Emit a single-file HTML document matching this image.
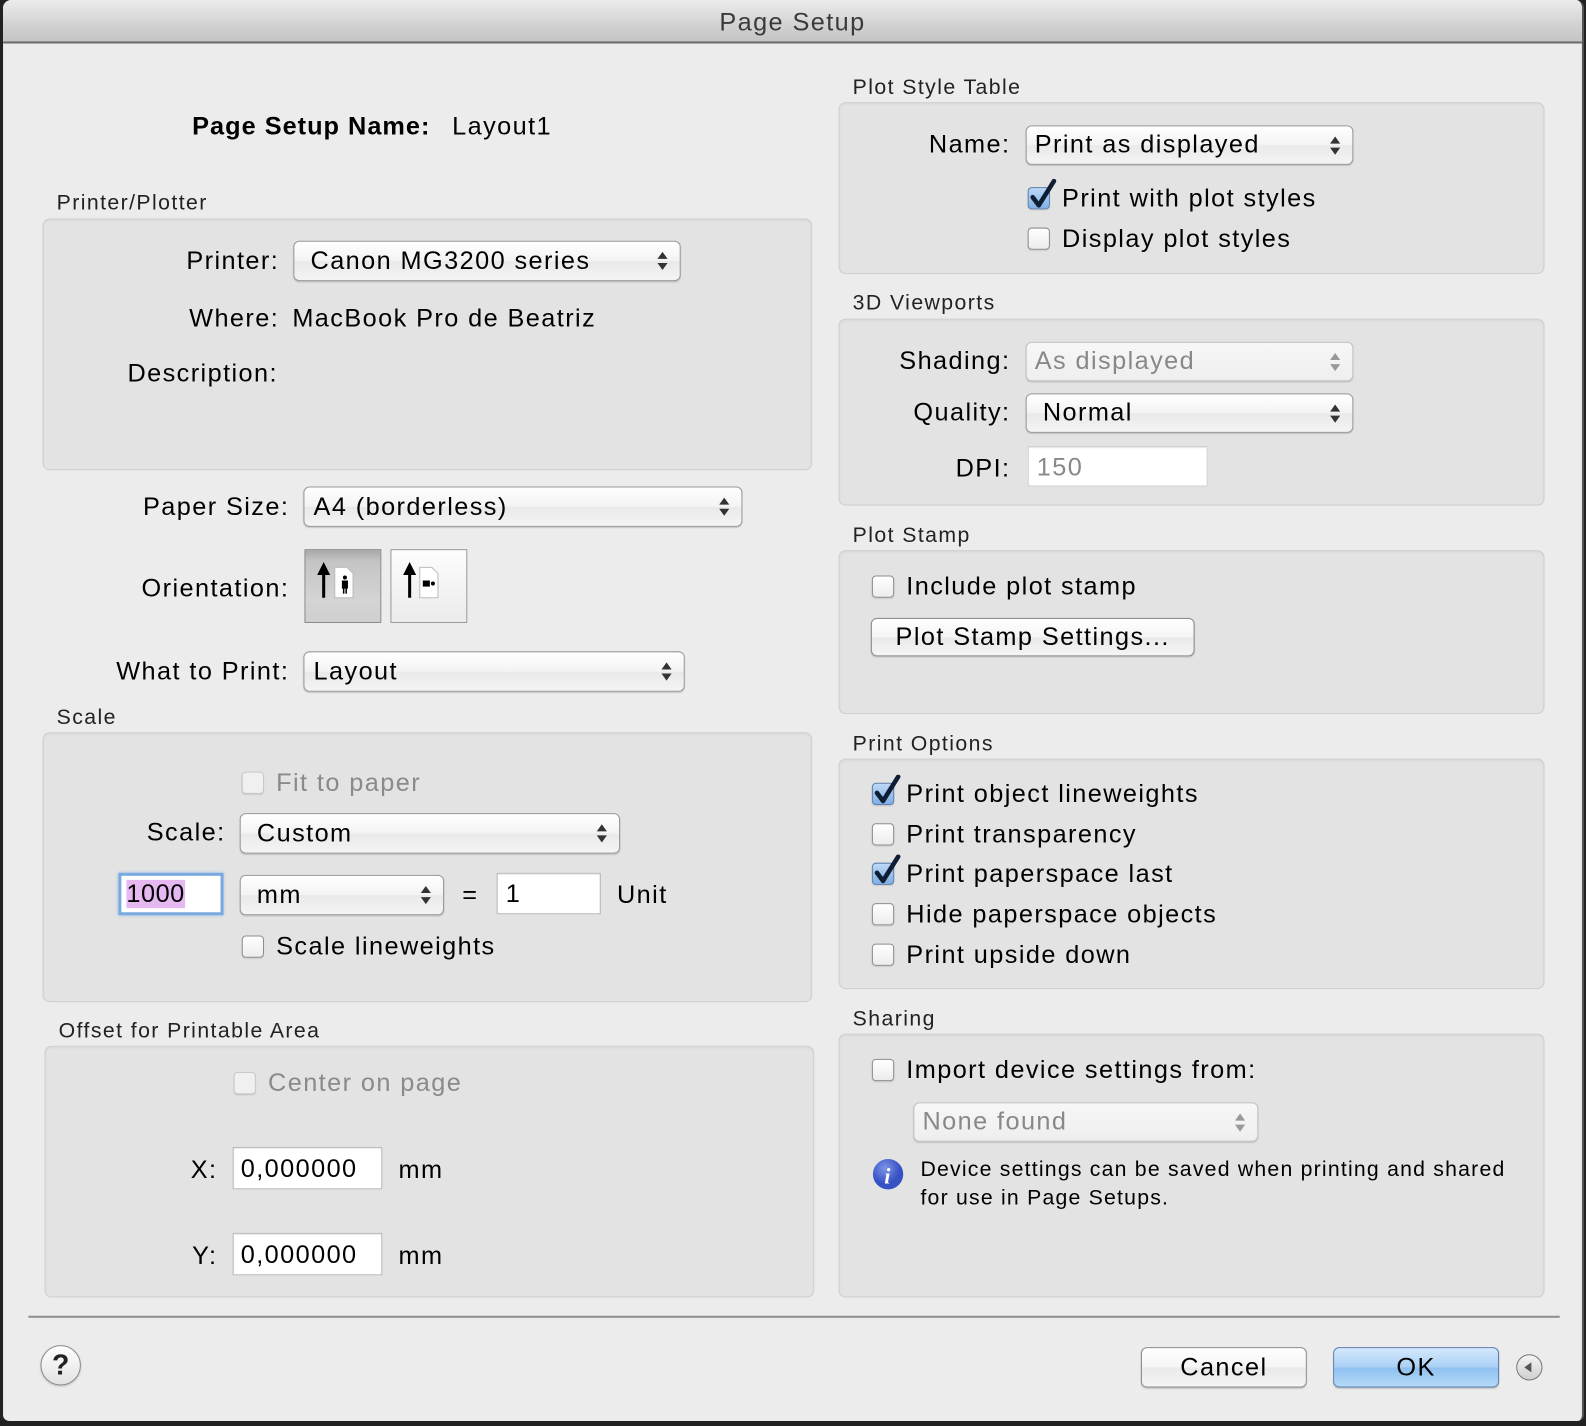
<!DOCTYPE html>
<html><head><meta charset="utf-8">
<style>
html,body{margin:0;padding:0;width:1586px;height:1426px;overflow:hidden;background:#222;}
#w{position:absolute;left:0;top:0;width:1568px;height:1410px;transform:scale(1.01148,1.01135);transform-origin:0 0;font-family:"Liberation Sans",sans-serif;color:#000;letter-spacing:1.4px;}
#win{position:absolute;left:3px;top:0;width:1561px;height:1405px;background:#ececec;border-radius:8px 8px 6px 6px;overflow:hidden;border-right:2px solid #555;}
#tb{position:absolute;left:0;top:0;right:0;height:41px;background:linear-gradient(#ececec,#d2d2d2 60%,#c4c4c4);border-bottom:2px solid #6a6a6a;text-align:center;font-size:25px;line-height:44px;color:#3a3a3a;}
.a{position:absolute;}
.t{position:absolute;font-size:25px;height:30px;line-height:30px;white-space:nowrap;}
.r{text-align:right;}
.s{font-size:21px;color:#222;}
.g{position:absolute;background:#e3e3e3;border:1px solid #cfcfcf;border-radius:7px;box-shadow:inset 0 1px 2px rgba(0,0,0,.06);}
.p{position:absolute;background:linear-gradient(#ffffff,#f3f3f3 50%,#e9e9e9 51%,#f4f4f4);border:1px solid #9a9a9a;border-radius:6px;box-shadow:0 1px 1px rgba(0,0,0,.15);font-size:25px;box-sizing:border-box;padding-left:16px;white-space:nowrap;}
.p:after{content:"";position:absolute;right:12px;top:50%;margin-top:-9px;width:0;height:0;border-left:5px solid transparent;border-right:5px solid transparent;border-bottom:7px solid #333;}
.p:before{content:"";position:absolute;right:12px;top:50%;margin-top:2px;width:0;height:0;border-left:5px solid transparent;border-right:5px solid transparent;border-top:7px solid #333;}
.p.d{color:#888;border-color:#c2c2c2;background:linear-gradient(#f7f7f7,#eeeeee);}
.p.d:after{border-bottom-color:#999}.p.d:before{border-top-color:#999}
.f{position:absolute;background:#fff;border:1px solid #b5b5b5;box-sizing:border-box;font-size:25px;padding-left:8px;box-shadow:inset 0 1px 1px rgba(0,0,0,.1);}
.c{position:absolute;width:22px;height:22px;border:1px solid #8e8e8e;border-radius:4px;background:linear-gradient(#fff,#ececec);box-sizing:border-box;box-shadow:0 1px 1px rgba(0,0,0,.1);}
.c.d{border-color:#c8c8c8;background:#f0f0f0;}
.c.k{background:linear-gradient(#bcd8f6,#7fb0e6);border-color:#5a7fae;}
.c svg{position:absolute;left:-1px;top:-9px;}
.b{position:absolute;border:1px solid #8d8d8d;border-radius:6px;background:linear-gradient(#ffffff,#f5f5f5 50%,#e9e9e9 51%,#f5f5f5);font-size:25px;text-align:center;box-sizing:border-box;box-shadow:0 1px 1px rgba(0,0,0,.15);}
.gr{color:#8a8a8a;}
</style></head><body>
<div id="w"><div id="win">
<div id="tb">Page Setup</div>
</div>
<div class="a" style="left:0;top:0;width:1568px;height:1410px">

<div class="t" style="left:190px;top:110px;font-weight:bold;letter-spacing:1px;">Page Setup Name:</div>
<div class="t" style="left:447px;top:110px;">Layout1</div>

<div class="t s" style="left:56px;top:186px;">Printer/Plotter</div>
<div class="g" style="left:42px;top:216px;width:759px;height:247px;"></div>
<div class="t r" style="left:80px;width:196px;top:243px;">Printer:</div>
<div class="p" style="left:290px;top:238px;width:383px;height:40px;line-height:38px;">Canon MG3200 series</div>
<div class="t r" style="left:80px;width:196px;top:300px;">Where:</div>
<div class="t" style="left:289px;top:300px;">MacBook Pro de Beatriz</div>
<div class="t" style="left:126px;top:354px;">Description:</div>

<div class="t r" style="left:60px;width:226px;top:486px;">Paper Size:</div>
<div class="p" style="left:300px;top:481px;width:434px;height:40px;line-height:38px;padding-left:9px;">A4 (borderless)</div>
<div class="t r" style="left:60px;width:226px;top:567px;">Orientation:</div>
<div class="a" style="left:301px;top:543px;width:76px;height:73px;border:1px solid #8a8a8a;box-sizing:border-box;background:linear-gradient(#a9a9a9,#c4c4c4 15%,#d4d4d4 70%,#cfcfcf);"></div>
<div class="a" style="left:386px;top:543px;width:76px;height:73px;border:1px solid #9a9a9a;box-sizing:border-box;background:linear-gradient(#fdfdfd,#ebebeb);"></div>
<svg class="a" style="left:301px;top:543px" width="170" height="73" viewBox="0 0 170 73">
 <path d="M19 48V22M15 24l4-8 4 8z" stroke="#000" stroke-width="3" fill="#000"/>
 <path d="M30 18h12l6 6v24H30z" fill="#fff" stroke="#bbb"/>
 <circle cx="40" cy="28" r="2" fill="#000"/><rect x="37" y="31" width="6" height="8" fill="#000"/><rect x="38" y="38" width="1.5" height="6" fill="#000"/><rect x="40.5" y="38" width="1.5" height="6" fill="#000"/>
 <path d="M104 48V22M100 24l4-8 4 8z" stroke="#000" stroke-width="3" fill="#000"/>
 <path d="M114 18h12l6 6v24H114z" fill="#fff" stroke="#bbb"/>
 <rect x="117" y="31" width="7" height="6" fill="#000"/><circle cx="127" cy="34" r="2" fill="#000"/>
</svg>
<div class="t r" style="left:60px;width:226px;top:649px;">What to Print:</div>
<div class="p" style="left:300px;top:644px;width:377px;height:40px;line-height:38px;padding-left:9px;">Layout</div>

<div class="t s" style="left:56px;top:695px;">Scale</div>
<div class="g" style="left:42px;top:724px;width:759px;height:265px;"></div>
<div class="c d" style="left:239px;top:763px;"></div>
<div class="t gr" style="left:273px;top:759px;">Fit to paper</div>
<div class="t r" style="left:80px;width:143px;top:808px;">Scale:</div>
<div class="p" style="left:237px;top:804px;width:376px;height:40px;line-height:38px;">Custom</div>
<div class="f" style="left:117px;top:863px;width:104px;height:42px;border:3px solid #7aa9e0;box-shadow:0 0 3px #7aa9e0;padding-left:5px;line-height:36px;letter-spacing:0.5px;"><span style="background:#e6b8f2;">1000</span></div>
<div class="p" style="left:237px;top:865px;width:202px;height:40px;line-height:38px;">mm</div>
<div class="t" style="left:457px;top:870px;">=</div>
<div class="f" style="left:491px;top:863px;width:103px;height:41px;line-height:41px;">1</div>
<div class="t" style="left:610px;top:870px;">Unit</div>
<div class="c" style="left:239px;top:925px;"></div>
<div class="t" style="left:273px;top:921px;">Scale lineweights</div>

<div class="t s" style="left:58px;top:1005px;">Offset for Printable Area</div>
<div class="g" style="left:44px;top:1034px;width:759px;height:247px;"></div>
<div class="c d" style="left:231px;top:1060px;"></div>
<div class="t gr" style="left:265px;top:1056px;">Center on page</div>
<div class="t r" style="left:100px;width:115px;top:1142px;">X:</div>
<div class="f" style="left:230px;top:1134px;width:148px;height:42px;line-height:42px;padding-left:7px;">0,000000</div>
<div class="t" style="left:394px;top:1142px;">mm</div>
<div class="t r" style="left:100px;width:115px;top:1227px;">Y:</div>
<div class="f" style="left:230px;top:1219px;width:148px;height:42px;line-height:42px;padding-left:7px;">0,000000</div>
<div class="t" style="left:394px;top:1227px;">mm</div>

<div class="t s" style="left:843px;top:72px;">Plot Style Table</div>
<div class="g" style="left:829px;top:101px;width:696px;height:168px;"></div>
<div class="t r" style="left:840px;width:159px;top:128px;">Name:</div>
<div class="p" style="left:1014px;top:124px;width:324px;height:39px;line-height:37px;padding-left:8px;">Print as displayed</div>
<div class="c k" style="left:1016px;top:185px;"><svg width="30" height="32" viewBox="0 0 30 32"><path d="M5 18l6 8L26 2" stroke="#0f1e33" stroke-width="4.5" fill="none" stroke-linecap="round" stroke-linejoin="round"/></svg></div>
<div class="t" style="left:1050px;top:181px;">Print with plot styles</div>
<div class="c" style="left:1016px;top:225px;"></div>
<div class="t" style="left:1050px;top:221px;">Display plot styles</div>

<div class="t s" style="left:843px;top:285px;">3D Viewports</div>
<div class="g" style="left:829px;top:315px;width:696px;height:183px;"></div>
<div class="t r" style="left:840px;width:159px;top:342px;">Shading:</div>
<div class="p d" style="left:1014px;top:338px;width:324px;height:39px;line-height:37px;padding-left:8px;">As displayed</div>
<div class="t r" style="left:840px;width:159px;top:393px;">Quality:</div>
<div class="p" style="left:1014px;top:389px;width:324px;height:39px;line-height:37px;">Normal</div>
<div class="t r" style="left:840px;width:159px;top:448px;">DPI:</div>
<div class="f" style="left:1016px;top:441px;width:178px;height:40px;line-height:40px;color:#888;border-color:#d0d0d0;">150</div>

<div class="t s" style="left:843px;top:515px;">Plot Stamp</div>
<div class="g" style="left:829px;top:544px;width:696px;height:160px;"></div>
<div class="c" style="left:862px;top:569px;"></div>
<div class="t" style="left:896px;top:565px;">Include plot stamp</div>
<div class="b" style="left:861px;top:611px;width:320px;height:38px;line-height:36px;">Plot Stamp Settings...</div>

<div class="t s" style="left:843px;top:721px;">Print Options</div>
<div class="g" style="left:829px;top:750px;width:696px;height:226px;"></div>
<div class="c k" style="left:862px;top:774px;"><svg width="30" height="32" viewBox="0 0 30 32"><path d="M5 18l6 8L26 2" stroke="#0f1e33" stroke-width="4.5" fill="none" stroke-linecap="round" stroke-linejoin="round"/></svg></div>
<div class="t" style="left:896px;top:770px;">Print object lineweights</div>
<div class="c" style="left:862px;top:814px;"></div>
<div class="t" style="left:896px;top:810px;">Print transparency</div>
<div class="c k" style="left:862px;top:853px;"><svg width="30" height="32" viewBox="0 0 30 32"><path d="M5 18l6 8L26 2" stroke="#0f1e33" stroke-width="4.5" fill="none" stroke-linecap="round" stroke-linejoin="round"/></svg></div>
<div class="t" style="left:896px;top:849px;">Print paperspace last</div>
<div class="c" style="left:862px;top:893px;"></div>
<div class="t" style="left:896px;top:889px;">Hide paperspace objects</div>
<div class="c" style="left:862px;top:933px;"></div>
<div class="t" style="left:896px;top:929px;">Print upside down</div>

<div class="t s" style="left:843px;top:993px;">Sharing</div>
<div class="g" style="left:829px;top:1022px;width:696px;height:259px;"></div>
<div class="c" style="left:862px;top:1047px;"></div>
<div class="t" style="left:896px;top:1043px;">Import device settings from:</div>
<div class="p d" style="left:903px;top:1090px;width:341px;height:39px;line-height:37px;padding-left:8px;">None found</div>
<svg class="a" style="left:862px;top:1145px" width="32" height="32"><defs><radialGradient id="ig" cx="40%" cy="30%"><stop offset="0" stop-color="#7f95e8"/><stop offset="1" stop-color="#3651c4"/></radialGradient></defs><circle cx="16" cy="16" r="15" fill="url(#ig)"/><text x="16" y="25" text-anchor="middle" font-family="Liberation Serif" font-style="italic" font-weight="bold" font-size="22" fill="#fff">i</text></svg>
<div class="a" style="left:910px;top:1143px;font-size:21px;line-height:28px;letter-spacing:1.2px;white-space:nowrap;">Device settings can be saved when printing and shared<br>for use in Page Setups.</div>

<div class="a" style="left:28px;top:1301px;width:1514px;height:2px;background:#8e8e8e;"></div>
<div class="a" style="left:40px;top:1330px;width:38px;height:38px;border:1px solid #8a8a8a;border-radius:50%;background:linear-gradient(#fff,#e2e2e2);box-shadow:0 1px 2px rgba(0,0,0,.2);text-align:center;line-height:38px;font-size:28px;font-weight:bold;color:#222;letter-spacing:0;">?</div>
<div class="b" style="left:1128px;top:1332px;width:164px;height:40px;line-height:38px;">Cancel</div>
<div class="b" style="left:1318px;top:1332px;width:164px;height:40px;line-height:38px;border-color:#5c7fae;background:linear-gradient(#d4e8fb,#a9d0f5 50%,#8ec0f0 51%,#b6daf8);">OK</div>
<div class="a" style="left:1499px;top:1339px;width:26px;height:26px;border:1px solid #777;border-radius:50%;background:linear-gradient(#f4f4f4,#d0d0d0);box-sizing:border-box;"></div>
<div class="a" style="left:1507px;top:1347px;width:0;height:0;border-top:5px solid transparent;border-bottom:5px solid transparent;border-right:7px solid #555;"></div>
</div>
</div>
</body></html>
